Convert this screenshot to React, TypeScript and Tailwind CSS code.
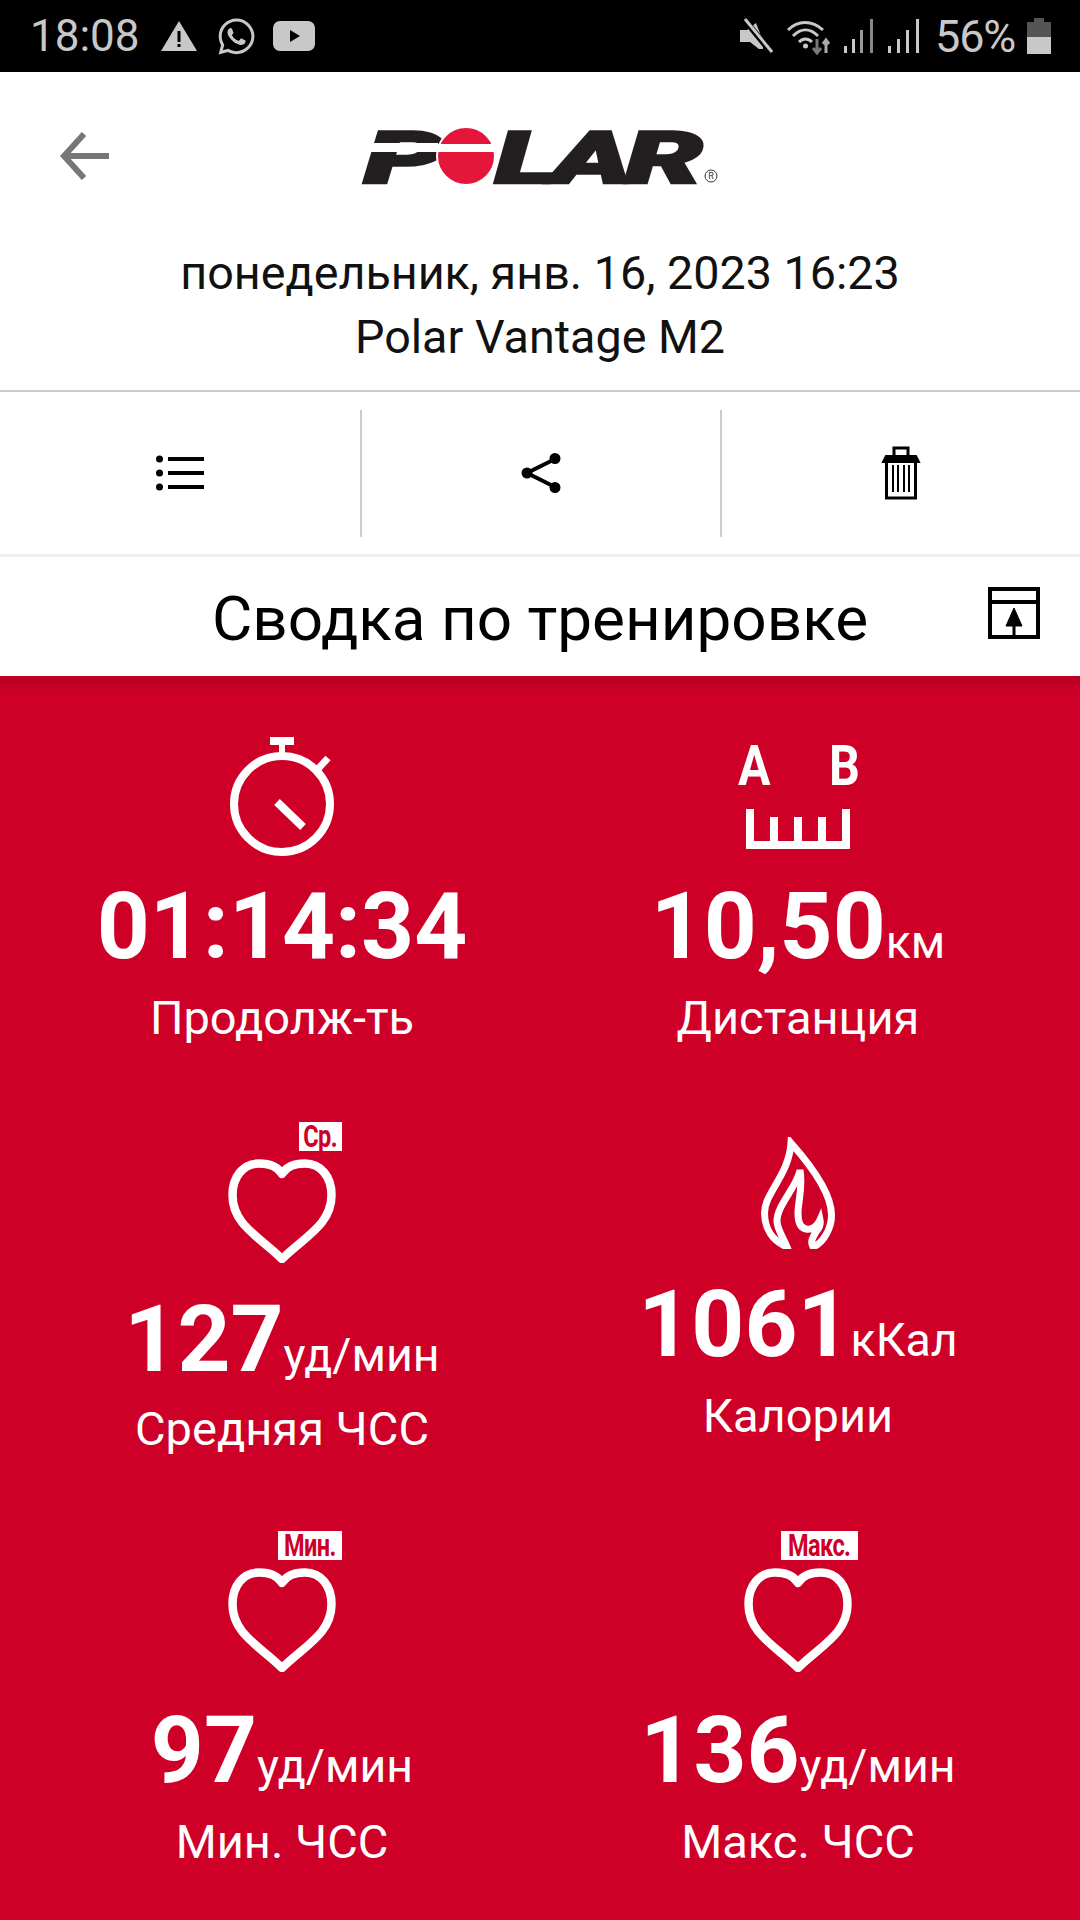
import { ReactNode } from "react";
import { FaWhatsapp } from "react-icons/fa";

function HeartOutline() {
  return (
    <svg width="108" height="104" viewBox="0 0 108 104" fill="none" stroke="white" strokeWidth="8.5" strokeLinejoin="round">
      <path d="M54 15C50 8 42 4.500 31 4.500C15 4.500 4.500 18 4.500 36C4.500 66 32 78 54 100C76 78 103.500 66 103.500 36C103.500 18 93 4.500 77 4.500C66 4.500 58 8 54 15Z" />
    </svg>
  );
}

function HeartBadge({ label, width }: { label: string; width: string }) {
  return (
    <div className="relative flex h-[141px] w-[120px] items-end justify-center">
      <span className={`absolute top-0 right-0 flex h-[29px] items-center justify-center bg-white text-[28px] leading-[29px] font-bold whitespace-nowrap text-[#ce0028] ${width}`}>
        <span className="inline-block origin-center scale-x-[0.84] scale-y-[1.1] tracking-tight">{label}</span>
      </span>
      <HeartOutline />
    </div>
  );
}

function Stopwatch() {
  return (
    <svg width="120" height="119" viewBox="0 0 120 119" fill="none" stroke="white">
      <circle cx="60" cy="67" r="48" strokeWidth="8" />
      <path d="M48 4H72" strokeWidth="8" />
      <path d="M60 8V19" strokeWidth="6" />
      <path d="M95 33L106 21" strokeWidth="7" />
      <path d="M55 65L81 90" strokeWidth="8" />
    </svg>
  );
}

function Ruler() {
  return (
    <svg className="overflow-visible" width="124" height="119" viewBox="0 0 124 119" fill="none">
      <text fontFamily="Roboto" fontWeight="700" fontSize="55" fill="white" transform="translate(2 48) scale(0.88 1)">A</text>
      <text fontFamily="Roboto" fontWeight="700" fontSize="55" fill="white" transform="translate(93 48) scale(0.88 1)">B</text>
      <path d="M14 72V108H110V72M38 80V108M62 80V108M86 80V108" stroke="white" strokeWidth="8" />
    </svg>
  );
}

function Flame() {
  return (
    <svg width="74" height="112" viewBox="0 0 74 112" fill="none" stroke="white" strokeWidth="7" strokeLinejoin="miter">
      <path d="M26 110C12 104 3.500 92 3.500 76C3.500 56 28 38 30 6C46 24 70.500 55 70.500 78C70.500 92 62 106 52 110C49 104 52 100 55 95C58 91 60 88 59 83C56 90 50 93 45 92C39 91 37 84 37 76C37 64 42 52 39 33C36 50 16 68 16 84C16 92 22 100 26 110Z" />
    </svg>
  );
}

function Stat({ icon, value, unit, label, valueGap, labelGap }: { icon: ReactNode; value: string; unit?: string; label: string; valueGap: string; labelGap: string }) {
  return (
    <div className="flex flex-col items-center text-white">
      {icon}
      <div className={`flex h-[100px] items-baseline justify-center whitespace-nowrap ${valueGap}`}>
        <span className="text-[92.5px] leading-[100px] font-bold">{value}</span>
        {unit && <span className="text-[46.5px] leading-[100px]">{unit}</span>}
      </div>
      <p className={`text-[47px] leading-[60px] ${labelGap}`}>{label}</p>
    </div>
  );
}

function StatusBar() {
  return (
    <div className="flex h-[72px] items-center justify-between bg-black pr-[29px] pl-[30px] text-[#c8c8c8]">
      <div className="flex items-center">
        <span className="inline-block w-[108px] text-[44px] leading-none">18:08</span>
        <svg className="ml-[22px]" width="38" height="32" viewBox="0 0 38 32">
          <path d="M19 1L37 31H1Z" fill="#c8c8c8" />
          <path d="M17.500 11H20.500V22H17.500ZM17.500 24H20.500V27H17.500Z" fill="black" />
        </svg>
        <FaWhatsapp className="ml-[18px]" size={41} />
        <svg className="ml-[16px]" width="42" height="30" viewBox="0 0 42 30">
          <rect width="42" height="30" rx="7" fill="#c8c8c8" />
          <path d="M17 9L27 15L17 21Z" fill="black" />
        </svg>
      </div>
      <div className="flex items-center">
        <svg width="34" height="36" viewBox="0 0 34 36" fill="#c8c8c8">
          <path d="M1 12H8L17 5L24 23V31H20L11 24H1Z" />
          <path d="M5 1L32 34" stroke="black" strokeWidth="6" />
          <path d="M6 1L33 34" stroke="#c8c8c8" strokeWidth="3" />
        </svg>
        <svg className="ml-[13px]" width="46" height="38" viewBox="0 0 46 38" fill="none" stroke="#c8c8c8" strokeWidth="3">
          <path d="M2 13C12 3 26 3 37 13M7 19C15 11 24 11 32 19M13 25C17 21 22 21 26 25" />
          <circle cx="19.500" cy="29" r="2.500" fill="#c8c8c8" stroke="none" />
          <path d="M31 22V36M27 31L31 36L35 31" stroke="#777" />
          <path d="M40 36V23M37 27L40 23L43 27" stroke="#aaa" />
        </svg>
        <svg className="ml-[12px]" width="32" height="36" viewBox="0 0 32 36" fill="#c8c8c8">
          <rect x="0" y="28" width="3" height="7" />
          <rect x="8" y="21" width="3" height="14" />
          <rect x="16" y="12" width="3" height="23" fill="#999" />
          <rect x="26" y="1" width="3" height="34" fill="#888" />
        </svg>
        <svg className="ml-[12px]" width="32" height="36" viewBox="0 0 32 36" fill="#c8c8c8">
          <rect x="0" y="28" width="3" height="7" />
          <rect x="9" y="21" width="3" height="14" />
          <rect x="18" y="12" width="3" height="23" />
          <rect x="28" y="1" width="3" height="34" />
        </svg>
        <span className="ml-[15px] inline-block w-[82px] text-[45px] leading-none tracking-tight whitespace-nowrap">56%</span>
        <svg className="ml-[10px]" width="24" height="36" viewBox="0 0 24 36">
          <path d="M7 0H17V4H24V19H0V4H7Z" fill="#555" />
          <rect y="19" width="24" height="17" fill="#c8c8c8" />
        </svg>
      </div>
    </div>
  );
}

function Logo() {
  return (
    <svg className="overflow-visible" width="360" height="58" viewBox="0 0 360 58">
      <g fontFamily="Roboto" fontWeight="900" fontStyle="italic" fontSize="72" fill="#231f20" stroke="#231f20" strokeWidth="2.500">
        <text x="4" y="56" textLength="80" lengthAdjust="spacingAndGlyphs">P</text>
        <text x="135" y="56" textLength="62" lengthAdjust="spacingAndGlyphs">L</text>
        <text x="192" y="56" textLength="80" lengthAdjust="spacingAndGlyphs">A</text>
        <text x="265" y="56" textLength="78" lengthAdjust="spacingAndGlyphs">R</text>
      </g>
      <rect x="0" y="16" width="78" height="9" fill="white" />
      <ellipse cx="106" cy="29" rx="29" ry="29" fill="#e4163a" stroke="white" strokeWidth="2" />
      <rect x="76" y="17" width="60" height="8" fill="white" />
      <circle cx="351" cy="49" r="6" fill="none" stroke="#333" strokeWidth="1" />
      <text x="351" y="52" fontFamily="Roboto" fontSize="9" textAnchor="middle" fill="#333">R</text>
    </svg>
  );
}

export default function App() {
  return (
    <div className="flex h-[1920px] w-[1080px] flex-col overflow-hidden bg-white font-['Roboto',sans-serif]">
      <StatusBar />

      <div className="grid grid-cols-[1fr_auto_1fr] items-center px-[60px] pt-[55px]">
        <svg width="50" height="48" viewBox="0 0 50 48" fill="none" stroke="#777" strokeWidth="6">
          <path d="M24 2L4 24L24 46M4 24H49" />
        </svg>
        <Logo />
      </div>
      <div className="mt-[56px] text-center text-[46.7px] leading-[64px] text-[#111]">
        <p>понедельник, янв. 16, 2023 16:23</p>
        <p>Polar Vantage M2</p>
      </div>

      <div className="mt-[21px] grid h-[167px] grid-cols-[360px_362px_358px] items-center border-t-2 border-b-[3px] border-t-[#ccc] border-b-[#eee]">
        <div className="flex h-[127px] items-center justify-center">
          <svg width="48" height="36" viewBox="0 0 48 36" fill="black">
            <circle cx="3.500" cy="4" r="3.500" />
            <circle cx="3.500" cy="18" r="3.500" />
            <circle cx="3.500" cy="32" r="3.500" />
            <rect x="12" y="2" width="36" height="4" />
            <rect x="12" y="16" width="36" height="4" />
            <rect x="12" y="30" width="36" height="4" />
          </svg>
        </div>
        <div className="flex h-[127px] items-center justify-center border-x-2 border-[#ccc]">
          <svg width="40" height="40" viewBox="0 0 40 40" fill="black" stroke="black" strokeWidth="4">
            <path d="M34 6L6 20L34 34" fill="none" />
            <circle cx="34" cy="5.500" r="3.500" />
            <circle cx="6" cy="20" r="3.500" />
            <circle cx="34" cy="34.500" r="3.500" />
          </svg>
        </div>
        <div className="flex h-[127px] items-center justify-center">
          <svg width="40" height="54" viewBox="0 0 40 54" fill="none" stroke="black" strokeWidth="3">
            <path d="M13 10V2H27V10" />
            <path d="M2 16L5 10H35L38 16Z" fill="black" strokeWidth="2" />
            <path d="M5.500 15V52H34.500V15Z" />
            <path d="M12 19V46M17 19V46M23 19V46M28 19V46" strokeWidth="2" />
          </svg>
        </div>
      </div>

      <div className="grid h-[119px] grid-cols-[1fr_auto_1fr] items-center px-[40px]">
        <span />
        <h1 className="pt-[5px] text-[62px] leading-none font-normal whitespace-nowrap text-black">Сводка по тренировке</h1>
        <svg className="mb-[8px] justify-self-end" width="52" height="52" viewBox="0 0 52 52" fill="none" stroke="black" strokeWidth="4">
          <rect x="2" y="2" width="48" height="48" />
          <path d="M2 15H50" />
          <path d="M26 21L18 39H34Z" fill="black" strokeWidth="1" />
          <path d="M26 36V50" strokeWidth="3" />
        </svg>
      </div>

      <div className="flex-1 bg-[linear-gradient(#b90024,#ce0028_18px)] px-6 pt-[61px]">
        <div className="grid grid-cols-2">
          <Stat icon={<Stopwatch />} value="01:14:34" label="Продолж-ть" valueGap="mt-[21px]" labelGap="mt-[11px]" />
          <Stat icon={<Ruler />} value="10,50" unit="км" label="Дистанция" valueGap="mt-[21px]" labelGap="mt-[11px]" />
        </div>
        <div className="mt-[74px] grid grid-cols-2">
          <Stat icon={<HeartBadge label="Ср." width="w-[43px]" />} value="127" unit="уд/мин" label="Средняя ЧСС" valueGap="mt-[27px]" labelGap="mt-[9px]" />
          <Stat icon={<div className="flex h-[127px] items-end"><Flame /></div>} value="1061" unit="кКал" label="Калории" valueGap="mt-[26px]" labelGap="mt-[11px]" />
        </div>
        <div className="mt-[72px] grid grid-cols-2">
          <Stat icon={<HeartBadge label="Мин." width="w-[64px]" />} value="97" unit="уд/мин" label="Мин. ЧСС" valueGap="mt-[29px]" labelGap="mt-[11px]" />
          <Stat icon={<HeartBadge label="Макс." width="w-[77px]" />} value="136" unit="уд/мин" label="Макс. ЧСС" valueGap="mt-[29px]" labelGap="mt-[11px]" />
        </div>
      </div>
    </div>
  );
}
